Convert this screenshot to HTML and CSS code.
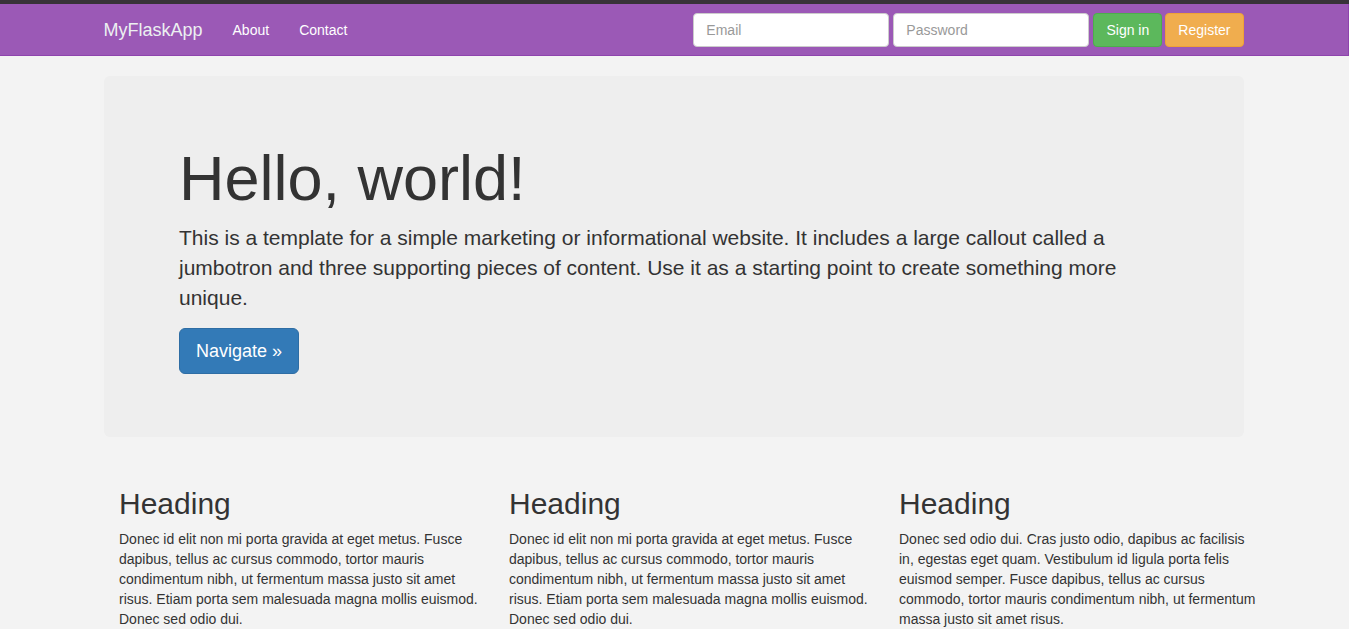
FILE: index.html
```html
<!DOCTYPE html>
<html lang="en">
<head>
<meta charset="utf-8">
<title>MyFlaskApp</title>
<link rel="stylesheet" href="styles.css">
</head>
<body>
<div class="topstrip"></div>
<nav class="navbar">
  <div class="nav-inner">
    <div class="nav-left">
      <a class="brand" href="#">MyFlaskApp</a>
      <a class="nav-link" href="#">About</a>
      <a class="nav-link" href="#">Contact</a>
    </div>
    <form class="nav-form">
      <input class="field" type="text" placeholder="Email">
      <input class="field" type="password" placeholder="Password">
      <button class="btn btn-success" type="button">Sign in</button>
      <button class="btn btn-warning" type="button">Register</button>
    </form>
  </div>
</nav>
<main class="container">
  <section class="jumbotron">
    <div class="jumbo-inner">
      <h1>Hello, world!</h1>
      <p class="lead">This is a template for a simple marketing or informational website. It includes a large callout called a jumbotron and three supporting pieces of content. Use it as a starting point to create something more unique.</p>
      <p class="actions"><a class="btn-lg" href="#">Navigate &raquo;</a></p>
    </div>
  </section>
  <div class="row">
    <div class="col">
      <h2>Heading</h2>
      <p>Donec id elit non mi porta gravida at eget metus. Fusce dapibus, tellus ac cursus commodo, tortor mauris condimentum nibh, ut fermentum massa justo sit amet risus. Etiam porta sem malesuada magna mollis euismod. Donec sed odio dui.</p>
    </div>
    <div class="col">
      <h2>Heading</h2>
      <p>Donec id elit non mi porta gravida at eget metus. Fusce dapibus, tellus ac cursus commodo, tortor mauris condimentum nibh, ut fermentum massa justo sit amet risus. Etiam porta sem malesuada magna mollis euismod. Donec sed odio dui.</p>
    </div>
    <div class="col">
      <h2>Heading</h2>
      <p>Donec sed odio dui. Cras justo odio, dapibus ac facilisis in, egestas eget quam. Vestibulum id ligula porta felis euismod semper. Fusce dapibus, tellus ac cursus commodo, tortor mauris condimentum nibh, ut fermentum massa justo sit amet risus.</p>
    </div>
  </div>
</main>
</body>
</html>
```

FILE: styles.css
```css
* { box-sizing: border-box; }
html, body { margin: 0; padding: 0; }
body {
  background: #f3f3f3;
  color: #333;
  font-family: "Liberation Sans", Arial, sans-serif;
  font-size: 14px;
  line-height: 1.42857;
}
.topstrip {
  height: 4px;
  background: #383338;
}
.navbar {
  background: #9b59b6;
  border-bottom: 1px solid #8e44ad;
  border-right: 1px solid #8e44ad;
  height: 52px;
}
.nav-inner {
  width: 1140px;
  margin-left: calc(50% - 570.5px);
  height: 51px;
  display: flex;
  align-items: center;
  justify-content: space-between;
}
.nav-left {
  display: flex;
  align-items: center;
  height: 100%;
}
.brand {
  color: #ecf0f1;
  font-size: 18px;
  text-decoration: none;
  padding: 0 15px 0 0;
  line-height: 20px;
}
.nav-link {
  color: #fff;
  text-decoration: none;
  padding: 0 15px;
  line-height: 20px;
}
.nav-form {
  display: flex;
  gap: 4px;
  align-items: center;
}
.field {
  width: 196px;
  height: 34px;
  padding: 6px 12px;
  border: 1px solid #ccc;
  border-radius: 4px;
  background: #fff;
  font-family: inherit;
  font-size: 14px;
  color: #555;
}
.field::placeholder { color: #999; }
.btn {
  height: 34px;
  padding: 6px 12px;
  border: 1px solid transparent;
  border-radius: 4px;
  font-family: inherit;
  font-size: 14px;
  color: #fff;
  cursor: pointer;
}
.btn-success { background: #5cb85c; border-color: #4cae4c; min-width: 69px; }
.btn-warning { background: #f0ad4e; border-color: #eea236; margin-left: -1px; }

.container {
  width: 1140px;
  margin: 20px 0 0 calc(50% - 570.5px);
}
.jumbotron {
  background: #eeeeee;
  border-radius: 6px;
  padding: 48px 60px;
  margin-bottom: 30px;
}
.jumbo-inner {
  padding: 0 15px;
}
.jumbotron h1 {
  font-size: 63px;
  font-weight: 500;
  line-height: 1.1;
  margin: 20px 0 10px;
}
.lead {
  font-size: 21px;
  line-height: 30px;
  margin: 0 0 15px;
  font-weight: 200;
}
.actions {
  margin: 0 0 15px;
}
.btn-lg {
  display: inline-block;
  background: #337ab7;
  border: 1px solid #2e6da4;
  color: #fff;
  border-radius: 6px;
  padding: 10px 16px;
  font-size: 18px;
  line-height: 24px;
  text-decoration: none;
}
.row {
  display: flex;
}
.col {
  width: 390px;
  flex: none;
  padding: 0 15px;
}
.col h2 {
  font-size: 30px;
  font-weight: 500;
  line-height: 1.1;
  margin: 20px 0 10px;
}
.col p {
  margin: 0 0 10px;
}
```
